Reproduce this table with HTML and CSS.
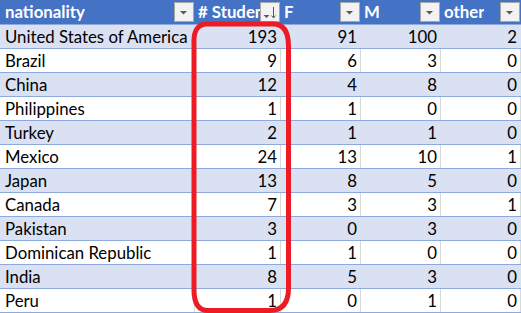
FILE: index.html
```html
<!DOCTYPE html>
<html>
<head>
<meta charset="utf-8">
<link rel="stylesheet" href="styles.css">
</head>
<body>
<div class="sheet">
  <div class="row head">
    <div class="cell first"><span class="label">nationality</span><span class="btn"><svg width="18" height="18" viewBox="0 0 18 18"><path d="M5 8 H12 L8.5 11.5 Z" fill="#595959"/></svg></span></div>
    <div class="cell"><span class="label"># Students</span><span class="btn"><svg width="18" height="18" viewBox="0 0 18 18"><path d="M2.5 12 H8.5 L5.5 15 Z" fill="#595959"/><path d="M12.5 4 V14.5" stroke="#595959" stroke-width="1"/><path d="M10.5 12.5 L12.5 15 L14.5 12.5" fill="none" stroke="#595959" stroke-width="1"/></svg></span></div>
    <div class="cell"><span class="label">F</span><span class="btn"><svg width="18" height="18" viewBox="0 0 18 18"><path d="M5 8 H12 L8.5 11.5 Z" fill="#595959"/></svg></span></div>
    <div class="cell"><span class="label">M</span><span class="btn"><svg width="18" height="18" viewBox="0 0 18 18"><path d="M5 8 H12 L8.5 11.5 Z" fill="#595959"/></svg></span></div>
    <div class="cell"><span class="label">other</span><span class="btn"><svg width="18" height="18" viewBox="0 0 18 18"><path d="M5 8 H12 L8.5 11.5 Z" fill="#595959"/></svg></span></div>
  </div>
  <div class="row band"><div class="cell first">United States of America</div><div class="cell num">193</div><div class="cell num">91</div><div class="cell num">100</div><div class="cell num">2</div></div>
  <div class="row"><div class="cell first">Brazil</div><div class="cell num">9</div><div class="cell num">6</div><div class="cell num">3</div><div class="cell num">0</div></div>
  <div class="row band"><div class="cell first">China</div><div class="cell num">12</div><div class="cell num">4</div><div class="cell num">8</div><div class="cell num">0</div></div>
  <div class="row"><div class="cell first">Philippines</div><div class="cell num">1</div><div class="cell num">1</div><div class="cell num">0</div><div class="cell num">0</div></div>
  <div class="row band"><div class="cell first">Turkey</div><div class="cell num">2</div><div class="cell num">1</div><div class="cell num">1</div><div class="cell num">0</div></div>
  <div class="row"><div class="cell first">Mexico</div><div class="cell num">24</div><div class="cell num">13</div><div class="cell num">10</div><div class="cell num">1</div></div>
  <div class="row band"><div class="cell first">Japan</div><div class="cell num">13</div><div class="cell num">8</div><div class="cell num">5</div><div class="cell num">0</div></div>
  <div class="row"><div class="cell first">Canada</div><div class="cell num">7</div><div class="cell num">3</div><div class="cell num">3</div><div class="cell num">1</div></div>
  <div class="row band"><div class="cell first">Pakistan</div><div class="cell num">3</div><div class="cell num">0</div><div class="cell num">3</div><div class="cell num">0</div></div>
  <div class="row"><div class="cell first">Dominican Republic</div><div class="cell num">1</div><div class="cell num">1</div><div class="cell num">0</div><div class="cell num">0</div></div>
  <div class="row band"><div class="cell first">India</div><div class="cell num">8</div><div class="cell num">5</div><div class="cell num">3</div><div class="cell num">0</div></div>
  <div class="row last"><div class="cell first">Peru</div><div class="cell num">1</div><div class="cell num">0</div><div class="cell num">1</div><div class="cell num">0</div></div>
  <svg class="mark" width="521" height="313" viewBox="0 0 521 313">
    <path d="M207 24 H273 Q288.5 24 288.5 46 V288 Q288.5 310.5 270 310.5 H208 Q194 310.5 194 290 V44 Q193 24 207 24 Z" fill="none" stroke="#ED1C24" stroke-width="5"/>
  </svg>
</div>
</body>
</html>
```
FILE: styles.css
```css
html, body {
  margin: 0;
  padding: 0;
  background: #ffffff;
}
.sheet {
  position: relative;
  width: 521px;
  font-family: Lato, "Open Sans", sans-serif;
  font-size: 16.8px;
  color: #000000;
}
.row {
  display: grid;
  grid-template-columns: 195px 86px 80px 80px 80px;
  height: 24px;
  box-sizing: border-box;
  border-top: 1px solid #8EA9DB;
}
.row.last {
  height: 25px;
  border-bottom: 1px solid #8EA9DB;
}
.row.head {
  border-top: none;
  background: #4472C4;
  color: #ffffff;
  font-weight: bold;
}
.row.band {
  background: #D9E1F2;
}
.cell {
  box-sizing: border-box;
  border-right: 1px solid #D9D9D9;
  padding: 0 3px;
  line-height: 24px;
  white-space: nowrap;
  overflow: hidden;
}
.row.band .cell,
.row.head .cell {
  border-right-color: transparent;
}
.cell.first {
  padding-left: 5px;
}
.cell.num {
  text-align: right;
  padding-right: 3px;
}
.row.head .cell {
  display: flex;
  align-items: flex-start;
  justify-content: space-between;
  padding-right: 0;
  line-height: 24px;
  position: relative;
}
.label {
  overflow: hidden;
}
.btn {
  flex: none;
  width: 20px;
  height: 20px;
  margin-top: 2px;
  box-sizing: border-box;
  border: 1px solid #A6A6A6;
  background: #F2F2F2;
  display: flex;
  align-items: center;
  justify-content: center;
  margin-left: -40px;
  position: relative;
}
.mark {
  position: absolute;
  left: 0;
  top: 0;
  pointer-events: none;
}
```
